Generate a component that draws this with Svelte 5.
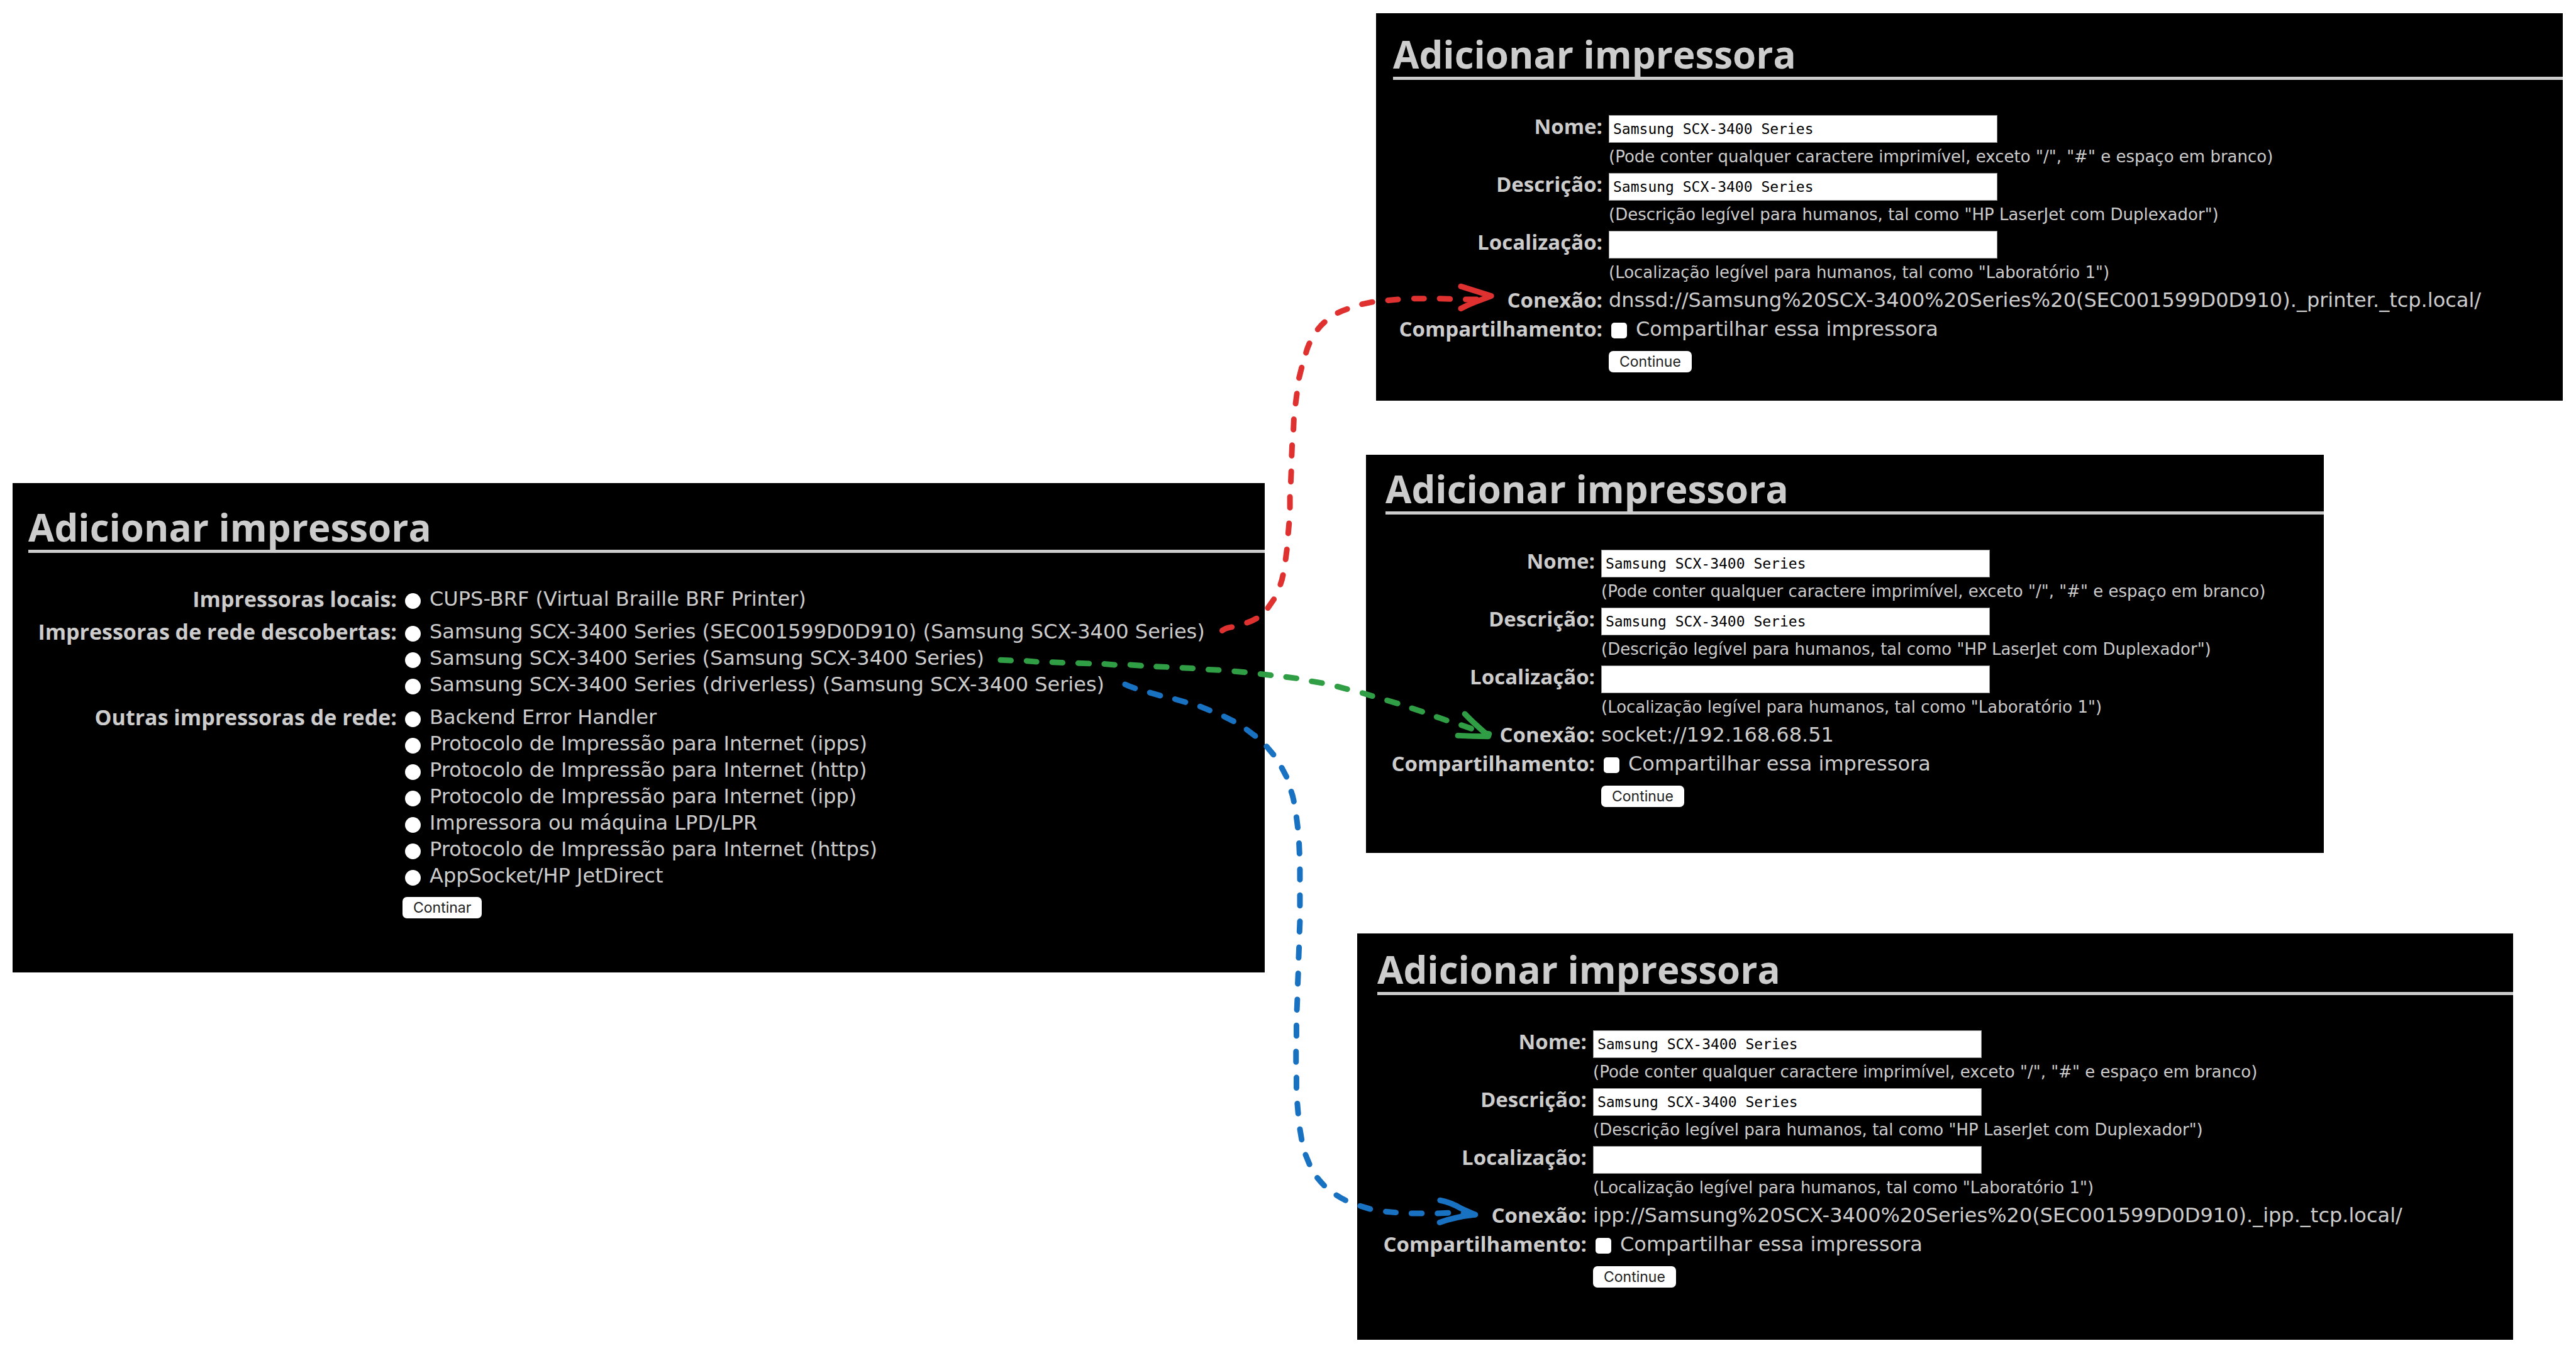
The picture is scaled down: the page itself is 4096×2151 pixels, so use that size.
<script>
  const groups = [
    { label: 'Impressoras locais:', items: ['CUPS-BRF (Virtual Braille BRF Printer)'] },
    {
      label: 'Impressoras de rede descobertas:',
      items: [
        'Samsung SCX-3400 Series (SEC001599D0D910) (Samsung SCX-3400 Series)',
        'Samsung SCX-3400 Series (Samsung SCX-3400 Series)',
        'Samsung SCX-3400 Series (driverless) (Samsung SCX-3400 Series)'
      ]
    },
    {
      label: 'Outras impressoras de rede:',
      items: [
        'Backend Error Handler',
        'Protocolo de Impressão para Internet (ipps)',
        'Protocolo de Impressão para Internet (http)',
        'Protocolo de Impressão para Internet (ipp)',
        'Impressora ou máquina LPD/LPR',
        'Protocolo de Impressão para Internet (https)',
        'AppSocket/HP JetDirect'
      ]
    }
  ];

  const fields = [
    { id: 'nome', label: 'Nome:', value: 'Samsung_SCX-3400_Series', hint: '(Pode conter qualquer caractere imprimível, exceto "/", "#" e espaço em branco)' },
    { id: 'descricao', label: 'Descrição:', value: 'Samsung SCX-3400 Series', hint: '(Descrição legível para humanos, tal como "HP LaserJet com Duplexador")' },
    { id: 'localizacao', label: 'Localização:', value: '', hint: '(Localização legível para humanos, tal como "Laboratório 1")' }
  ];

  const printers = [
    { id: 'dnssd', uri: 'dnssd://Samsung%20SCX-3400%20Series%20(SEC001599D0D910)._printer._tcp.local/' },
    { id: 'socket', uri: 'socket://192.168.68.51' },
    { id: 'ipp', uri: 'ipp://Samsung%20SCX-3400%20Series%20(SEC001599D0D910)._ipp._tcp.local/' }
  ];
</script>

<main class="board">
  <section class="panel chooser">
    <h1>Adicionar impressora</h1>
    <form class="choices">
      {#each groups as group, g}
        <span class="name" id="group-{g}">{group.label}</span>
        <div class="options" role="radiogroup" aria-labelledby="group-{g}">
          {#each group.items as item}
            <label class="option"><input type="radio" name="device" value={item} />{item}</label>
          {/each}
        </div>
      {/each}
      <button type="button">Continar</button>
    </form>
  </section>

  <div class="results">
    {#each printers as printer}
      <section class="panel {printer.id}">
        <h1>Adicionar impressora</h1>
        <form class="details">
          {#each fields as field}
            <label class="name" for="{printer.id}-{field.id}">{field.label}</label>
            <div class="field">
              <input type="text" id="{printer.id}-{field.id}" value={field.value} />
              <small>{field.hint}</small>
            </div>
          {/each}
          <span class="name">Conexão:</span>
          <span class="uri">{printer.uri}</span>
          <span class="name">Compartilhamento:</span>
          <label class="option"><input type="checkbox" />Compartilhar essa impressora</label>
          <button type="button">Continue</button>
        </form>
      </section>
    {/each}
  </div>

  <svg class="arrows" viewBox="0 0 5937 3118" aria-hidden="true">
    <g class="red">
      <path d="M2817 1453Q2825 1447 2839 1445M2874 1435Q2886 1431 2896 1425M2922 1401L2936 1381M2951 1347Q2955 1336 2957 1325M2963 1289L2966 1266M2969 1229L2971 1206M2973 1170V1145M2975 1110L2976 1086M2977 1050L2978 1026M2981 990L2982 966M2986 930L2989 907M2994 871L3000 847M3010 813Q3013 802 3018 791M3037 759Q3044 750 3053 742M3083 721Q3093 716 3105 712M3139 701L3163 696M3199 692L3222 690M3259 688H3282M3318 688L3342 689M3378 690H3403" />
      <path d="M3367 660L3437 682L3400 696Q3382 703 3367 711" />
    </g>
    <g class="green">
      <path d="M2306 1521L2330 1522M2366 1523L2389 1525M2425 1526L2449 1527M2485 1528L2510 1529M2545 1530L2569 1532M2605 1532L2630 1534M2665 1536L2689 1537M2725 1539L2749 1540M2785 1543L2809 1544M2845 1547L2869 1549M2905 1553L2929 1556M2964 1560L2988 1563M3023 1570L3047 1574M3082 1582L3105 1588M3140 1597L3163 1604M3197 1614L3221 1621M3254 1632L3278 1640M3311 1652L3334 1660M3368 1671L3391 1679" />
      <path d="M3376 1645Q3394 1664 3424 1690L3432 1691L3430 1697Q3394 1697 3360 1695" />
    </g>
    <g class="blue">
      <path d="M2593 1577Q2603 1582 2616 1586M2650 1596L2674 1603M2708 1611L2732 1618M2766 1628L2788 1637M2821 1651L2843 1662M2873 1681L2893 1696M2919 1720L2935 1739M2954 1769L2965 1790M2976 1824Q2980 1835 2982 1847M2988 1883L2991 1907M2994 1943L2995 1967M2996 2003V2027M2996 2063V2087M2996 2123L2995 2147M2994 2183L2993 2207M2992 2243L2991 2267M2990 2303L2989 2327M2988 2363V2387M2987 2423V2447M2988 2483V2507M2990 2543L2992 2566M2996 2602L3000 2626M3009 2661L3018 2683M3036 2714Q3044 2724 3052 2732M3080 2754Q3091 2761 3101 2766M3135 2779L3158 2786M3194 2792L3217 2794M3253 2796H3277M3313 2796L3338 2795M3373 2796L3400 2799" />
      <path d="M3319 2766Q3342 2770 3368 2785L3400 2799Q3354 2804 3318 2817" />
    </g>
  </svg>
</main>

<style>
  :global(body) {
    margin: 0;
    background: #fff;
  }

  .board {
    position: relative;
    display: grid;
    grid-template-columns: 1991fr 1917fr;
    column-gap: 147px;
    align-items: start;
    padding: 21px 21px 21px 20px;
    color: #ccc;
    font: 32px/44px 'DejaVu Sans', sans-serif;
  }

  .panel {
    background: #000;
    white-space: nowrap;
  }

  h1 {
    margin: 0 0 52px;
    padding-bottom: 9px;
    border-bottom: 5px solid #ccc;
    font: bold 60px/54px 'Open Sans', sans-serif;
  }

  .name {
    font-family: 'Open Sans', sans-serif;
    font-size: 33px;
    font-weight: bold;
    text-align: right;
  }

  .chooser {
    margin-top: 747px;
    padding: 43px 0 86px 25px;
  }

  .choices {
    display: grid;
    grid-template-columns: 586px 1fr;
    gap: 10px 9px;
    line-height: 42px;
  }

  .choices .name {
    font-size: 34px;
  }

  .results {
    display: flex;
    flex-direction: column;
  }

  .dnssd {
    margin-left: 30px;
    padding: 38px 0 45px 27px;
  }

  .socket {
    margin: 86px 380px 128px 14px;
    padding: 27px 0 73px 31px;
  }

  .ipp {
    margin-right: 79px;
    padding: 30px 0 83px 32px;
  }

  .details {
    display: grid;
    grid-template-columns: 333px 1fr;
    grid-template-rows: repeat(3, 92px) repeat(2, 46px) auto;
    column-gap: 10px;
  }

  .field {
    display: flex;
    flex-direction: column;
    align-items: flex-start;
    padding-top: 4px;
  }

  input[type='text'] {
    box-sizing: border-box;
    width: 618px;
    height: 44px;
    padding: 0 6px;
    border: 1px solid #999;
    border-radius: 0;
    background: #fff;
    color: #000;
    font: 23px/42px 'DejaVu Sans Mono', monospace;
  }

  small {
    font-size: 26px;
  }

  .option {
    display: flex;
    align-items: flex-start;
    gap: 14px;
  }

  input[type='radio'],
  input[type='checkbox'] {
    appearance: none;
    flex: none;
    width: 25px;
    height: 25px;
    margin: 12px 0 0 4px;
    background: #fff;
  }

  input[type='radio'] {
    border-radius: 50%;
  }

  input[type='checkbox'] {
    border-radius: 5px;
  }

  button {
    grid-column: 2;
    justify-self: start;
    height: 34px;
    margin: 3px 0 0;
    padding: 0 17px;
    border: 0;
    border-radius: 7px;
    background: #fff;
    color: #222;
    font: 23px/34px Inter, sans-serif;
  }

  .details button {
    margin-top: 11px;
  }

  .arrows {
    position: absolute;
    top: 0;
    left: 0;
    width: 100%;
    pointer-events: none;
  }

  .arrows path {
    fill: none;
    stroke-width: 13;
    stroke-linecap: round;
    stroke-linejoin: round;
  }

  .red {
    stroke: #e03131;
  }

  .green {
    stroke: #2f9e44;
  }

  .blue {
    stroke: #1971c2;
  }
</style>
